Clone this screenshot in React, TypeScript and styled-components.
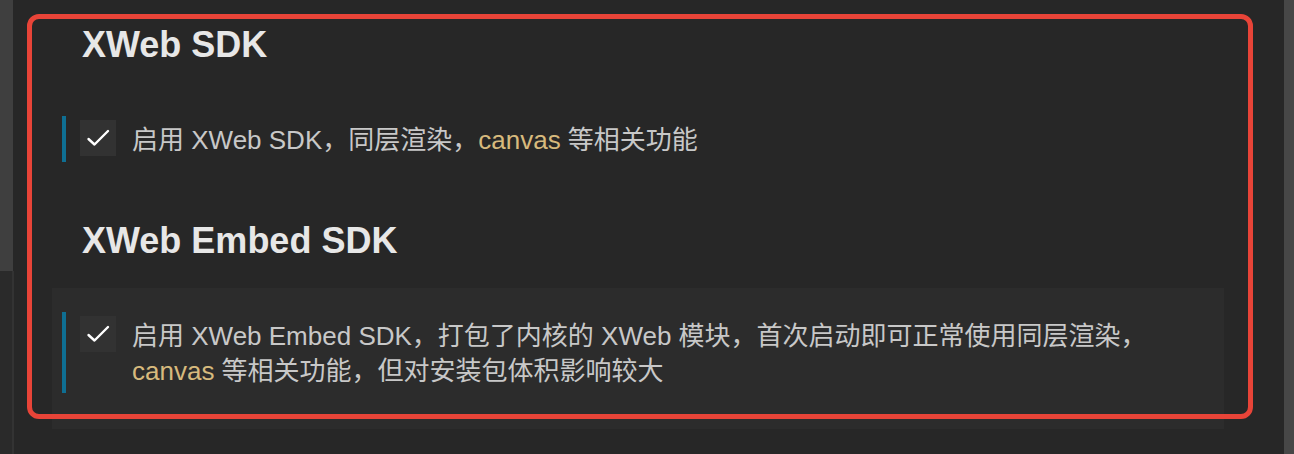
import React from "react";
import styled, { createGlobalStyle } from "styled-components";

const Global = createGlobalStyle`
  html, body {
    margin: 0;
    padding: 0;
    background: #272727;
  }
  body {
    font-family: "Liberation Sans", "Noto Sans CJK SC", sans-serif;
  }
`;

const Page = styled.div`
  position: relative;
  display: flex;
  width: 1294px;
  height: 454px;
  overflow: hidden;
  background: #272727;
`;

const SideRail = styled.div`
  display: flex;
  flex-direction: column;
  width: 14px;
  flex-shrink: 0;
`;

const RailThumb = styled.div`
  height: 271px;
  width: 13px;
  background: #3f3f3f;
`;

const RailRest = styled.div`
  flex: 1;
  background: #2a2a2a;
  border-right: 2px solid #333333;
  width: 12px;
`;

const Main = styled.main`
  flex: 1;
  padding: 2px 60px 0 38px;
`;

const Scrollbar = styled.div`
  width: 10px;
  flex-shrink: 0;
  background: #474747;
`;

const SectionTitle = styled.h2`
  margin: 0;
  padding: 22px 0 26px 30px;
  font-size: 36px;
  line-height: 42px;
  font-weight: 700;
  color: #e7e7e7;
`;

const SettingRow = styled.div<{ $hover?: boolean }>`
  display: flex;
  align-items: flex-start;
  padding: 24px 0 36px 10px;
  background: ${(p) => (p.$hover ? "#2c2c2c" : "transparent")};
`;

const ModifiedBar = styled.span`
  align-self: stretch;
  width: 4px;
  flex-shrink: 0;
  margin-right: 14px;
  background: #0f6f93;
`;

const CheckBox = styled.span`
  display: flex;
  align-items: center;
  justify-content: center;
  width: 36px;
  height: 36px;
  flex-shrink: 0;
  margin-top: 4px;
  margin-right: 16px;
  background: #323232;
`;

const Description = styled.div`
  padding: 7px 0 4px;
  font-size: 26px;
  line-height: 35px;
  color: #c8c8c8;
`;

const Code = styled.span`
  color: #d7ba7d;
`;

const Annotation = styled.div`
  position: absolute;
  left: 27px;
  top: 14px;
  width: 1226px;
  height: 405px;
  box-sizing: border-box;
  border: 5px solid #e84438;
  border-radius: 12px;
  pointer-events: none;
`;

function Check() {
  return (
    <CheckBox>
      <svg width="36" height="36" viewBox="0 0 36 36" fill="none">
        <polyline
          points="8.5,19 14.5,24.5 28,11"
          stroke="#ffffff"
          strokeWidth="2.4"
          strokeLinecap="round"
          strokeLinejoin="round"
        />
      </svg>
    </CheckBox>
  );
}

export default function App() {
  return (
    <Page>
      <Global />
      <SideRail>
        <RailThumb />
        <RailRest />
      </SideRail>
      <Main>
        <SectionTitle>XWeb SDK</SectionTitle>
        <SettingRow>
          <ModifiedBar />
          <Check />
          <Description>
            启用 XWeb SDK，同层渲染，<Code>canvas</Code> 等相关功能
          </Description>
        </SettingRow>
        <SectionTitle>XWeb Embed SDK</SectionTitle>
        <SettingRow $hover>
          <ModifiedBar />
          <Check />
          <Description>
            启用 XWeb Embed SDK，打包了内核的 XWeb 模块，首次启动即可正常使用同层渲染，
            <br />
            <Code>canvas</Code> 等相关功能，但对安装包体积影响较大
          </Description>
        </SettingRow>
      </Main>
      <Scrollbar />
      <Annotation />
    </Page>
  );
}
